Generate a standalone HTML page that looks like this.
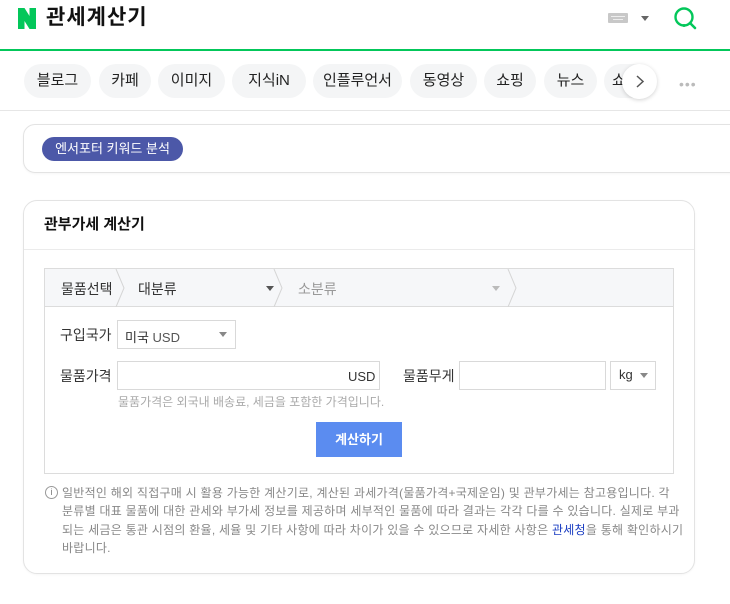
<!DOCTYPE html>
<html><head><meta charset="utf-8"><style>
*{margin:0;padding:0;box-sizing:border-box}
body{width:730px;height:604px;background:#fff;font-family:"Liberation Sans","Noto Sans CJK KR",sans-serif;position:relative;overflow:hidden;color:#222}
.a{position:absolute}
.pill{position:absolute;top:64px;height:34px;border-radius:17px;background:#f4f5f6;font-size:15px;line-height:34px;text-align:center;color:#222}
.box{position:absolute;border:1px solid #d9d9d9;background:#fff}
.lbl{position:absolute;font-size:13px;color:#333}
.tri{position:absolute;width:0;height:0;border-left:4px solid transparent;border-right:4px solid transparent;border-top:5px solid #555}
</style></head><body>
<!-- header -->
<svg class="a" style="left:18px;top:8px" width="18" height="21" viewBox="0 0 18 21"><path d="M0 0 H6.5 L11.5 8 V0 H18 V21 H11.5 L6.5 13 V21 H0 Z" fill="#03c75a"/></svg>
<div class="a" style="left:46px;top:4px;font-size:21px;font-weight:bold;line-height:28px;color:#111;letter-spacing:1px">관세계산기</div>
<div class="a" style="left:608px;top:13px;width:20px;height:10px;background:#c8c8c8;border-radius:1px"></div>
<div class="a" style="left:611px;top:16px;width:14px;height:1px;background:#eee"></div>
<div class="a" style="left:613px;top:19px;width:10px;height:1px;background:#eee"></div>
<div class="tri" style="left:641px;top:16px;border-top-color:#666"></div>
<svg class="a" style="left:673px;top:6px" width="26" height="25" viewBox="0 0 26 25"><circle cx="11" cy="11" r="8.5" fill="none" stroke="#03c75a" stroke-width="2.4"/><path d="M17 17 L22 22" stroke="#03c75a" stroke-width="2.6" stroke-linecap="round"/><circle cx="11" cy="19.5" r="1.5" fill="#03c75a"/></svg>
<div class="a" style="left:0;top:49px;width:730px;height:2px;background:#03c75a"></div>
<!-- tabs -->
<div class="pill" style="left:24px;width:67px">블로그</div>
<div class="pill" style="left:99px;width:52px">카페</div>
<div class="pill" style="left:158px;width:67px">이미지</div>
<div class="pill" style="left:232px;width:74px">지식iN</div>
<div class="pill" style="left:313px;width:89px">인플루언서</div>
<div class="pill" style="left:410px;width:67px">동영상</div>
<div class="pill" style="left:484px;width:52px">쇼핑</div>
<div class="pill" style="left:544px;width:53px">뉴스</div>
<div class="pill" style="left:604px;width:52px;overflow:hidden;text-align:left;padding-left:8px">쇼</div>
<div class="a" style="left:622px;top:64px;width:35px;height:35px;border-radius:50%;background:#fff;box-shadow:0 1px 4px rgba(0,0,0,.18)"></div>
<svg class="a" style="left:634px;top:74px" width="12" height="15"><path d="M3 2 L9 7.5 L3 13" fill="none" stroke="#555" stroke-width="1.5"/></svg>
<div class="a" style="left:679px;top:76px;font-size:14px;color:#bbb;letter-spacing:1px">•••</div>
<div class="a" style="left:0;top:110px;width:730px;height:1px;background:#e6e6e6"></div>
<!-- card1 -->
<div class="a" style="left:23px;top:124px;width:740px;height:49px;border:1px solid #e3e3e3;border-radius:12px;box-shadow:0 1px 2px rgba(0,0,0,.04)"></div>
<div class="a" style="left:42px;top:137px;width:141px;height:24px;border-radius:12px;background:#4c58a8;color:#fff;font-size:13px;line-height:24px;text-align:center">엔서포터 키워드 분석</div>
<!-- card2 -->
<div class="a" style="left:23px;top:200px;width:672px;height:374px;border:1px solid #e3e3e3;border-radius:14px;box-shadow:0 1px 2px rgba(0,0,0,.04)"></div>
<div class="a" style="left:44px;top:214px;font-size:15px;font-weight:bold;line-height:22px;color:#111">관부가세 계산기</div>
<div class="a" style="left:24px;top:249px;width:670px;height:1px;background:#ebebeb"></div>
<div class="a" style="left:44px;top:268px;width:630px;height:206px;border:1px solid #dcdcdc"></div>
<div class="a" style="left:45px;top:269px;width:628px;height:38px;background:#f6f7f9;border-bottom:1px solid #dcdcdc"></div>
<svg class="a" style="left:110px;top:269px" width="420" height="38"><path d="M6 0 L14 19 L6 38 M164 0 L172 19 L164 38 M398 0 L406 19 L398 38" fill="none" stroke="#d5d5d5"/></svg>
<div class="lbl" style="left:61px;top:279px;font-size:14px">물품선택</div>
<div class="lbl" style="left:138px;top:279px;font-size:14px">대분류</div>
<div class="tri" style="left:266px;top:286px"></div>
<div class="lbl" style="left:298px;top:279px;font-size:14px;color:#999">소분류</div>
<div class="tri" style="left:492px;top:286px;border-top-color:#bbb"></div>
<div class="lbl" style="left:60px;top:325px;font-size:14px">구입국가</div>
<div class="box" style="left:117px;top:320px;width:119px;height:29px"></div>
<div class="lbl" style="left:125px;top:327px;font-size:13px">미국 <span style="color:#555">USD</span></div>
<div class="tri" style="left:219px;top:332px;border-top-color:#888"></div>
<div class="lbl" style="left:60px;top:366px;font-size:14px">물품가격</div>
<div class="box" style="left:117px;top:361px;width:263px;height:29px"></div>
<div class="lbl" style="left:348px;top:369px;font-size:13px">USD</div>
<div class="lbl" style="left:403px;top:366px;font-size:14px">물품무게</div>
<div class="box" style="left:459px;top:361px;width:147px;height:29px"></div>
<div class="box" style="left:610px;top:361px;width:46px;height:29px"></div>
<div class="lbl" style="left:619px;top:367px;font-size:13px">kg</div>
<div class="tri" style="left:640px;top:373px;border-top-color:#888"></div>
<div class="lbl" style="left:118px;top:393px;font-size:12px;color:#aaa">물품가격은 외국내 배송료, 세금을 포함한 가격입니다.</div>
<div class="a" style="left:316px;top:422px;width:86px;height:35px;background:#5b8cf0;color:#fff;font-size:13px;font-weight:bold;line-height:35px;text-align:center">계산하기</div>
<div class="a" style="left:45px;top:486px;width:13px;height:13px;border:1px solid #999;border-radius:50%;font-size:9px;line-height:11px;text-align:center;color:#777">i</div>
<div class="a" style="left:62px;top:484px;width:622px;font-size:12px;line-height:18.3px;color:#888;letter-spacing:0.25px">일반적인 해외 직접구매 시 활용 가능한 계산기로, 계산된 과세가격(물품가격+국제운임) 및 관부가세는 참고용입니다. 각 분류별 대표 물품에 대한 관세와 부가세 정보를 제공하며 세부적인 물품에 따라 결과는 각각 다를 수 있습니다. 실제로 부과되는 세금은 통관 시점의 환율, 세율 및 기타 사항에 따라 차이가 있을 수 있으므로 자세한 사항은 <span style="color:#1a3dc2">관세청</span>을 통해 확인하시기 바랍니다.</div>
</body></html>
